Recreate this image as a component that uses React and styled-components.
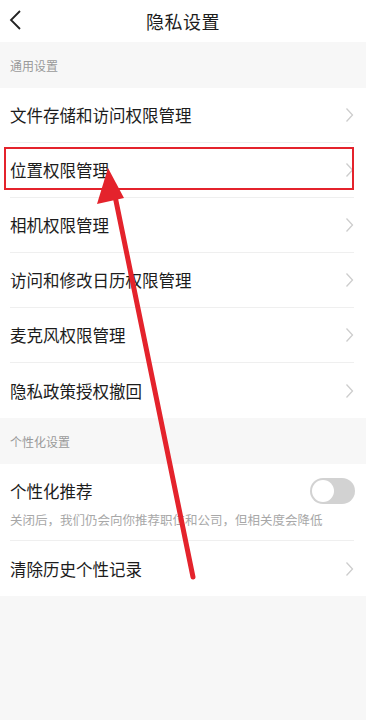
import React from 'react'
import styled, { createGlobalStyle } from 'styled-components'

const GlobalStyle = createGlobalStyle`
  html, body {
    margin: 0;
    padding: 0;
    background: #f7f7f7;
    font-family: "Noto Sans CJK SC", "Noto Sans", sans-serif;
  }
`

const Page = styled.div`
  position: relative;
  width: 366px;
  min-height: 720px;
  background: #f7f7f7;
  overflow: hidden;
`
const Header = styled.div`
  height: 42px;
  background: #fff;
  display: flex;
  align-items: center;
  justify-content: center;
  position: relative;
`
const BackBtn = styled.div`
  position: absolute;
  left: 8px;
  top: 9px;
  width: 20px;
  height: 22px;
`
const Title = styled.h1`
  margin: 0;
  font-size: 18px;
  font-weight: 400;
  color: #1c1c1c;
  letter-spacing: 0.5px;
`
const SectionLabel = styled.div`
  height: 46px;
  display: flex;
  align-items: center;
  padding-left: 10px;
  font-size: 12px;
  color: #9a9a9a;
  background: #f7f7f7;
`
const List = styled.div`
  background: #fff;
  padding: 0 12px 0 10px;
`
const Row = styled.div`
  height: 55px;
  display: flex;
  align-items: center;
  justify-content: space-between;
  border-bottom: ${p => (p.$last ? 'none' : '1px solid #efefef')};
  box-sizing: border-box;
`
const ToggleRow = styled.div`
  height: 77px;
  display: flex;
  flex-direction: column;
  padding-top: 13px;
  box-sizing: border-box;
  border-bottom: 1px solid #efefef;
`
const TitleLine = styled.div`
  display: flex;
  align-items: center;
  justify-content: space-between;
  height: 27px;
`
const Label = styled.span`
  font-size: 16.5px;
  color: #1c1c1c;
`
const Sub = styled.span`
  margin-top: 6px;
  font-size: 12.5px;
  color: #a8a8a8;
  white-space: nowrap;
`
const Toggle = styled.div`
  width: 45px;
  height: 26px;
  border-radius: 13px;
  background: #d2d2d2;
  position: relative;
  margin-right: -1px;
  &::after {
    content: '';
    position: absolute;
    left: 2px;
    top: 2px;
    width: 22px;
    height: 22px;
    border-radius: 50%;
    background: #fff;
  }
`
const Highlight = styled.div`
  position: absolute;
  left: 4px;
  top: 147px;
  width: 350px;
  height: 43px;
  border: 2.5px solid #e4232c;
  box-sizing: border-box;
  pointer-events: none;
`
const Overlay = styled.svg`
  position: absolute;
  left: 0;
  top: 0;
  pointer-events: none;
`

const Chevron = () => (
  <svg width="9" height="16" viewBox="0 0 9 16">
    <path d="M1.5 1.5 L7.5 8 L1.5 14.5" fill="none" stroke="#cdcdcd" strokeWidth="1.3" />
  </svg>
)

const general = [
  '文件存储和访问权限管理',
  '位置权限管理',
  '相机权限管理',
  '访问和修改日历权限管理',
  '麦克风权限管理',
  '隐私政策授权撤回',
]

function App() {
  return (
    <>
      <GlobalStyle />
      <Page>
        <Header>
          <BackBtn>
            <svg width="20" height="22" viewBox="0 0 20 22">
              <path d="M12 2 L3 11 L12 20" fill="none" stroke="#222" strokeWidth="1.8" />
            </svg>
          </BackBtn>
          <Title>隐私设置</Title>
        </Header>
        <SectionLabel>通用设置</SectionLabel>
        <List>
          {general.map((t, i) => (
            <Row key={t} $last={i === general.length - 1}>
              <Label>{t}</Label>
              <Chevron />
            </Row>
          ))}
        </List>
        <SectionLabel>个性化设置</SectionLabel>
        <List>
          <ToggleRow>
            <TitleLine>
              <Label>个性化推荐</Label>
              <Toggle />
            </TitleLine>
            <Sub>关闭后，我们仍会向你推荐职位和公司，但相关度会降低</Sub>
          </ToggleRow>
          <Row $last>
            <Label>清除历史个性记录</Label>
            <Chevron />
          </Row>
        </List>
        <Highlight />
        <Overlay width="366" height="720" viewBox="0 0 366 720">
          <line x1="193" y1="577" x2="115" y2="196" stroke="#e4232c" strokeWidth="5" strokeLinecap="round" />
          <polygon points="108,168 97,204 124,198" fill="#e4232c" />
        </Overlay>
      </Page>
    </>
  )
}

export default App
